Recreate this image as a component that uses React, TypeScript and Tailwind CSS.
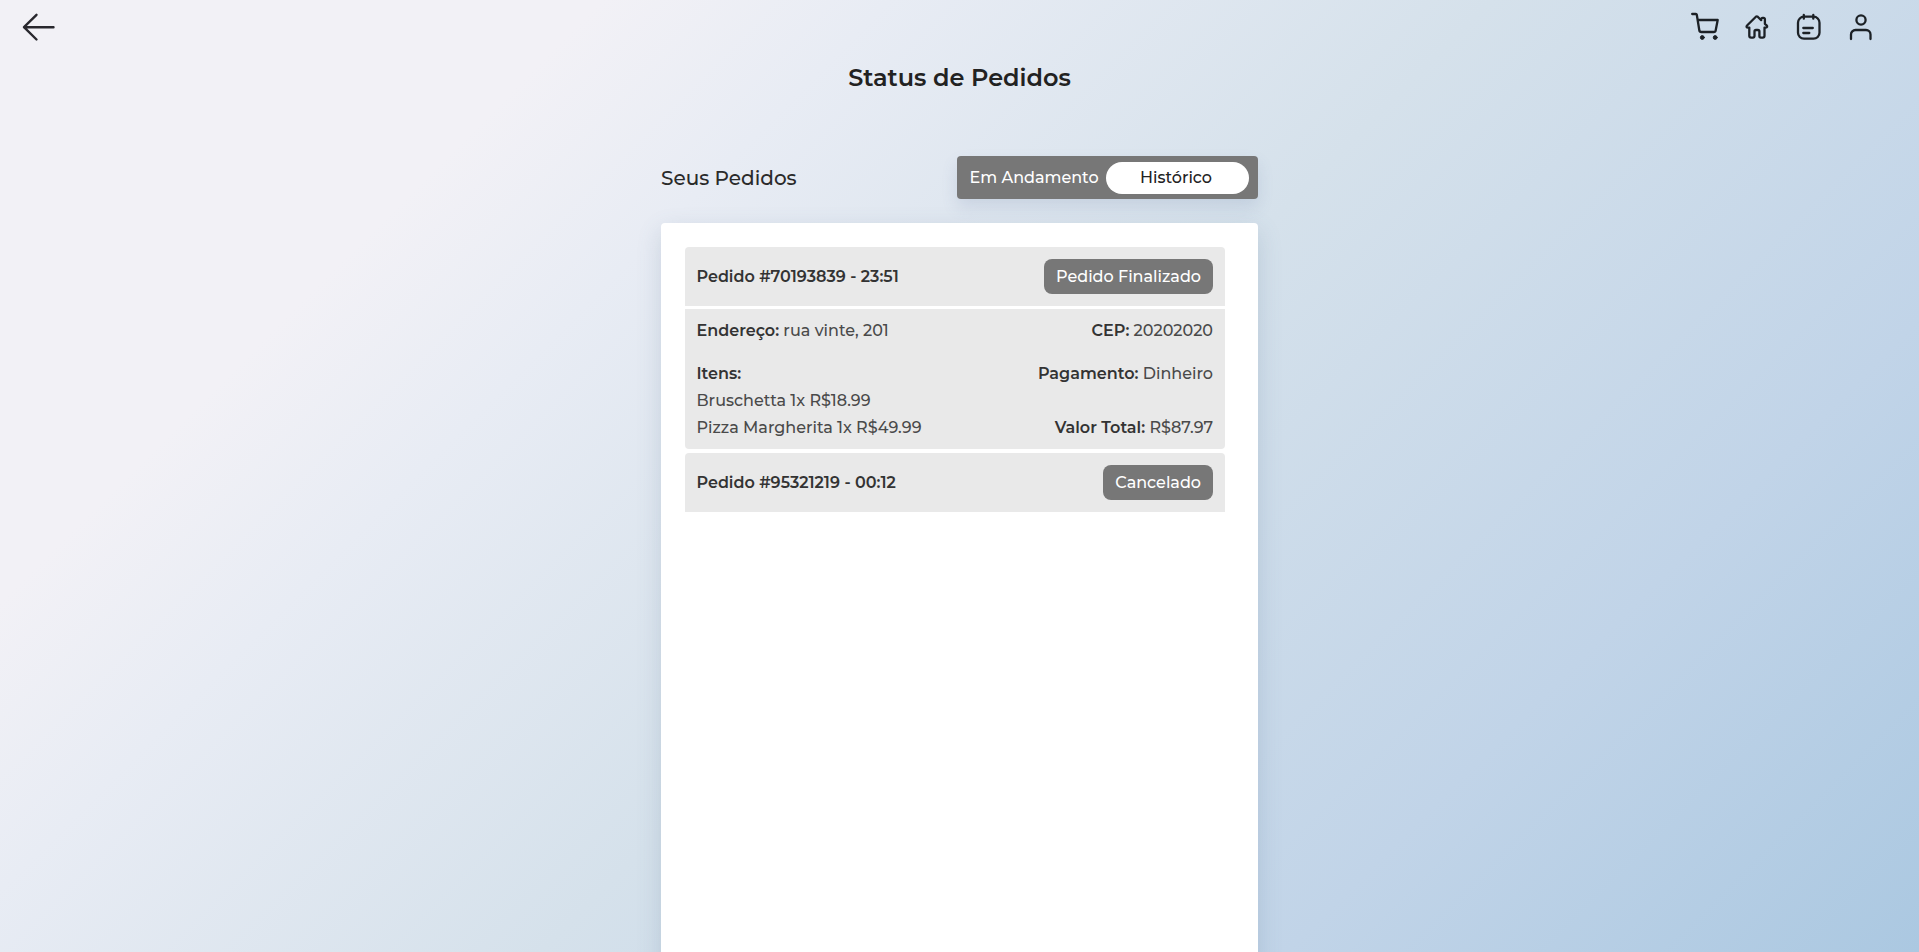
import type { ReactNode } from 'react';

function Icon({ children }: { children: ReactNode }) {
  return (
    <svg width="32" height="32" viewBox="0 0 32 32" fill="none" stroke="#1c2126" strokeWidth="2.3" strokeLinecap="round" strokeLinejoin="round">
      {children}
    </svg>
  );
}

function TopBar() {
  return (
    <nav className="flex h-[54px] shrink-0 items-center justify-between pl-[22px] pr-[42px]">
      <button aria-label="Voltar">
        <svg width="34" height="32" viewBox="0 0 34 32" fill="none" stroke="#29282e" strokeWidth="2.4" strokeLinecap="round" strokeLinejoin="round">
          <path d="M14.500 3.800 2 16.200l12.500 12.300M2 16.200h29.500" />
        </svg>
      </button>
      <div className="flex gap-5">
        <Icon>
          <path d="M3.200 3h3.600a1 1 0 0 1 1 .8L10.300 19.300a2 2 0 0 0 2 1.700H24.700a2 2 0 0 0 2-1.700L28.700 9H9" />
          <circle cx="13.300" cy="26.500" r="1.900" fill="#1c2126" strokeWidth="1" />
          <circle cx="26.200" cy="26.500" r="1.900" fill="#1c2126" strokeWidth="1" />
        </Icon>
        <Icon>
          <path d="M16.700 5.700a1.500 1.500 0 0 0-1.800 0L6.300 14.200c-1.500 1.500-.7 2.400.8 2.400H8.300V24.800a1.800 1.800 0 0 0 1.800 1.800h1.900a1.500 1.500 0 0 0 1.500-1.500V20.500a1.500 1.500 0 0 1 1.500-1.500h1.900a1.500 1.500 0 0 1 1.500 1.500v4.600a1.500 1.500 0 0 0 1.500 1.500h1.800a1.800 1.800 0 0 0 1.800-1.800V16.600h1.200c1.500 0 2.100-1.100.7-2.400L23.900 12.800V8.200a1.300 1.300 0 0 0-1.300-1.300h-1.100a1.300 1.300 0 0 0-1.300 1.300v1Z" />
        </Icon>
        <Icon>
          <rect x="5" y="5.700" width="21.500" height="22" rx="6" />
          <path d="M10.800 4v3.700M20.300 4v3.700M10.300 17h9.500M10.300 22h6" />
        </Icon>
        <Icon>
          <circle cx="16" cy="9" r="4.600" />
          <path d="M6 28v-4.500a4.500 4.500 0 0 1 4.500-4.500h10.500a4.500 4.500 0 0 1 4.500 4.500V28" />
        </Icon>
      </div>
    </nav>
  );
}

function OrderHeader({ title, status }: { title: string; status: string }) {
  return (
    <div className="flex h-[59px] items-center justify-between rounded-t bg-[#e9e9e9] pl-[11.5px] pr-3">
      <h3 className="text-base font-semibold text-[#333]">{title}</h3>
      <span className="flex h-[35px] items-center rounded-lg bg-[#777] px-3 text-base font-medium text-white">{status}</span>
    </div>
  );
}

function Field({ label, value }: { label: string; value?: string }) {
  return (
    <>
      <b className="font-semibold text-[#333]">{label}:</b>
      {value && ` ${value}`}
    </>
  );
}

export default function App() {
  return (
    <div className="flex h-screen flex-col overflow-hidden bg-[linear-gradient(135deg,#f2f1f6_21%,#e8ecf4_31%,#d5e1eb_52%,#c1d4e8_78%,#abc8e1_100%)] font-['Montserrat','Inter',sans-serif] text-[#222]">
      <TopBar />
      <h1 className="shrink-0 pt-px text-center text-2xl font-semibold leading-[46px]">Status de Pedidos</h1>
      <main className="mx-auto flex w-[597px] shrink-0 flex-col">
        <div className="mt-[55px] flex h-[43px] shrink-0 items-center justify-between">
          <h2 className="text-xl font-medium text-[#2a2a2a]">Seus Pedidos</h2>
          <div className="flex h-[43px] w-[301px] items-center rounded bg-[#777] pl-[12.5px] shadow-[0_8px_16px_rgba(80,100,150,0.15)]">
            <button className="w-[136.5px] whitespace-nowrap text-left text-base font-medium text-white">Em Andamento</button>
            <button className="h-8 w-[143px] rounded-full bg-white pr-[3px] text-base font-medium">Histórico</button>
          </div>
        </div>
        <section className="mt-6 h-[800px] shrink-0 rounded bg-white pl-6 pr-[33px] pt-6 shadow-[0_8px_24px_rgba(80,110,140,0.2)]">
          <OrderHeader title="Pedido #70193839 - 23:51" status="Pedido Finalizado" />
          <div className="mt-[3px] flex h-[140px] justify-between rounded-b bg-[#e9e9e9] pl-[11.5px] pr-3 pt-2 text-base font-medium leading-[27px] text-[#4a4a4a]">
            <div>
              <p><Field label="Endereço" value="rua vinte, 201" /></p>
              <p className="mt-4"><Field label="Itens" /></p>
              <p>Bruschetta 1x R$18.99</p>
              <p>Pizza Margherita 1x R$49.99</p>
            </div>
            <div className="text-right">
              <p><Field label="CEP" value="20202020" /></p>
              <p className="mt-4"><Field label="Pagamento" value="Dinheiro" /></p>
              <p className="mt-[27px]"><Field label="Valor Total" value="R$87.97" /></p>
            </div>
          </div>
          <div className="mt-1">
            <OrderHeader title="Pedido #95321219 - 00:12" status="Cancelado" />
          </div>
        </section>
      </main>
    </div>
  );
}
